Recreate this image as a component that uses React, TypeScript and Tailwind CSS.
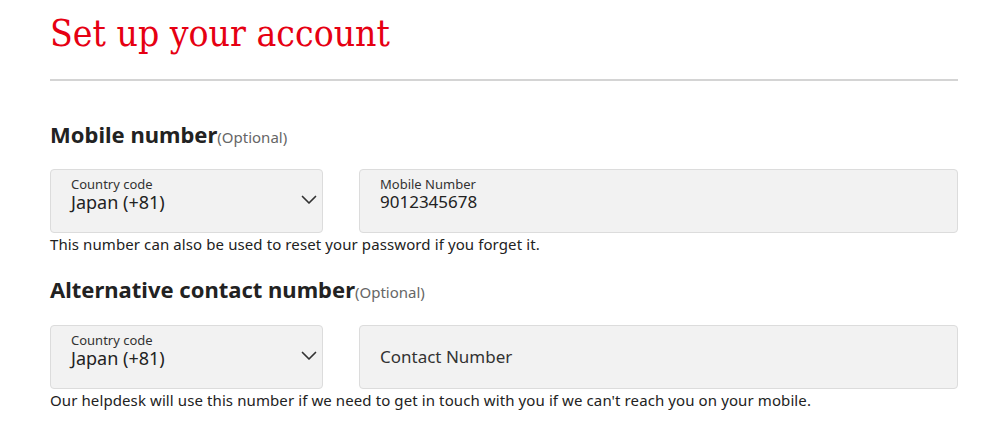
const sans = "font-['Source_Sans_Pro','Noto_Sans',sans-serif]";

function Chevron() {
  return (
    <svg width="16" height="10" viewBox="0 0 16 10" fill="none" className="text-[#333]">
      <path d="M1.5 1.5 8 8l6.5-6.5" stroke="currentColor" strokeWidth="1.7" strokeLinecap="round" strokeLinejoin="round" />
    </svg>
  );
}

function CountrySelect() {
  return (
    <div className="relative h-16 w-[273px] rounded-[4px] border border-[#dcdcdc] bg-[#f2f2f2] pl-5 pt-[7px]">
      <div className="flex flex-col">
        <span className="text-[13px] leading-[15px] text-[#333]">Country code</span>
        <span className="text-[18px] leading-[21px] text-[#222]">Japan (+81)</span>
      </div>
      <div className="absolute right-[5px] top-[25px]">
        <Chevron />
      </div>
    </div>
  );
}

export default function App() {
  return (
    <div className={`ml-[50px] w-[908px] bg-white pt-[10px] ${sans}`}>
      <h1 className="font-['DejaVu_Serif_Condensed','DejaVu_Serif',serif] text-[37px] leading-[48px] text-[#e60012] [font-stretch:condensed]">
        Set up your account
      </h1>
      <hr className="mt-[21px] border-t-2 border-[#d4d4d4]" />

      <h2 className="mt-[38px] text-[22px] font-bold leading-[30px] text-[#222]">
        Mobile number
        <span className="text-[15px] font-normal text-[#666]">(Optional)</span>
      </h2>
      <div className="mt-[17px] flex gap-[36px]">
        <CountrySelect />
        <div className="flex h-16 flex-1 flex-col rounded-[4px] border border-[#dcdcdc] bg-[#f2f2f2] px-5 pt-[7px]">
          <span className="text-[13px] leading-[15px] text-[#333]">Mobile Number</span>
          <span className="text-[17px] leading-[20px] text-[#222]">9012345678</span>
        </div>
      </div>
      <p className="text-[15px] leading-[22px] tracking-[0.1px] text-[#222]">
        This number can also be used to reset your password if you forget it.
      </p>

      <h2 className="mt-[19px] text-[22px] font-bold leading-[30px] text-[#222]">
        Alternative contact number
        <span className="text-[15px] font-normal text-[#666]">(Optional)</span>
      </h2>
      <div className="mt-[18px] flex gap-[36px]">
        <CountrySelect />
        <div className="flex h-16 flex-1 items-center rounded-[4px] border border-[#dcdcdc] bg-[#f2f2f2] px-5">
          <span className="text-[17px] text-[#333]">Contact Number</span>
        </div>
      </div>
      <p className="text-[15px] leading-[22px] tracking-[0.1px] text-[#222]">
        Our helpdesk will use this number if we need to get in touch with you if we can't reach you on your mobile.
      </p>
    </div>
  );
}
